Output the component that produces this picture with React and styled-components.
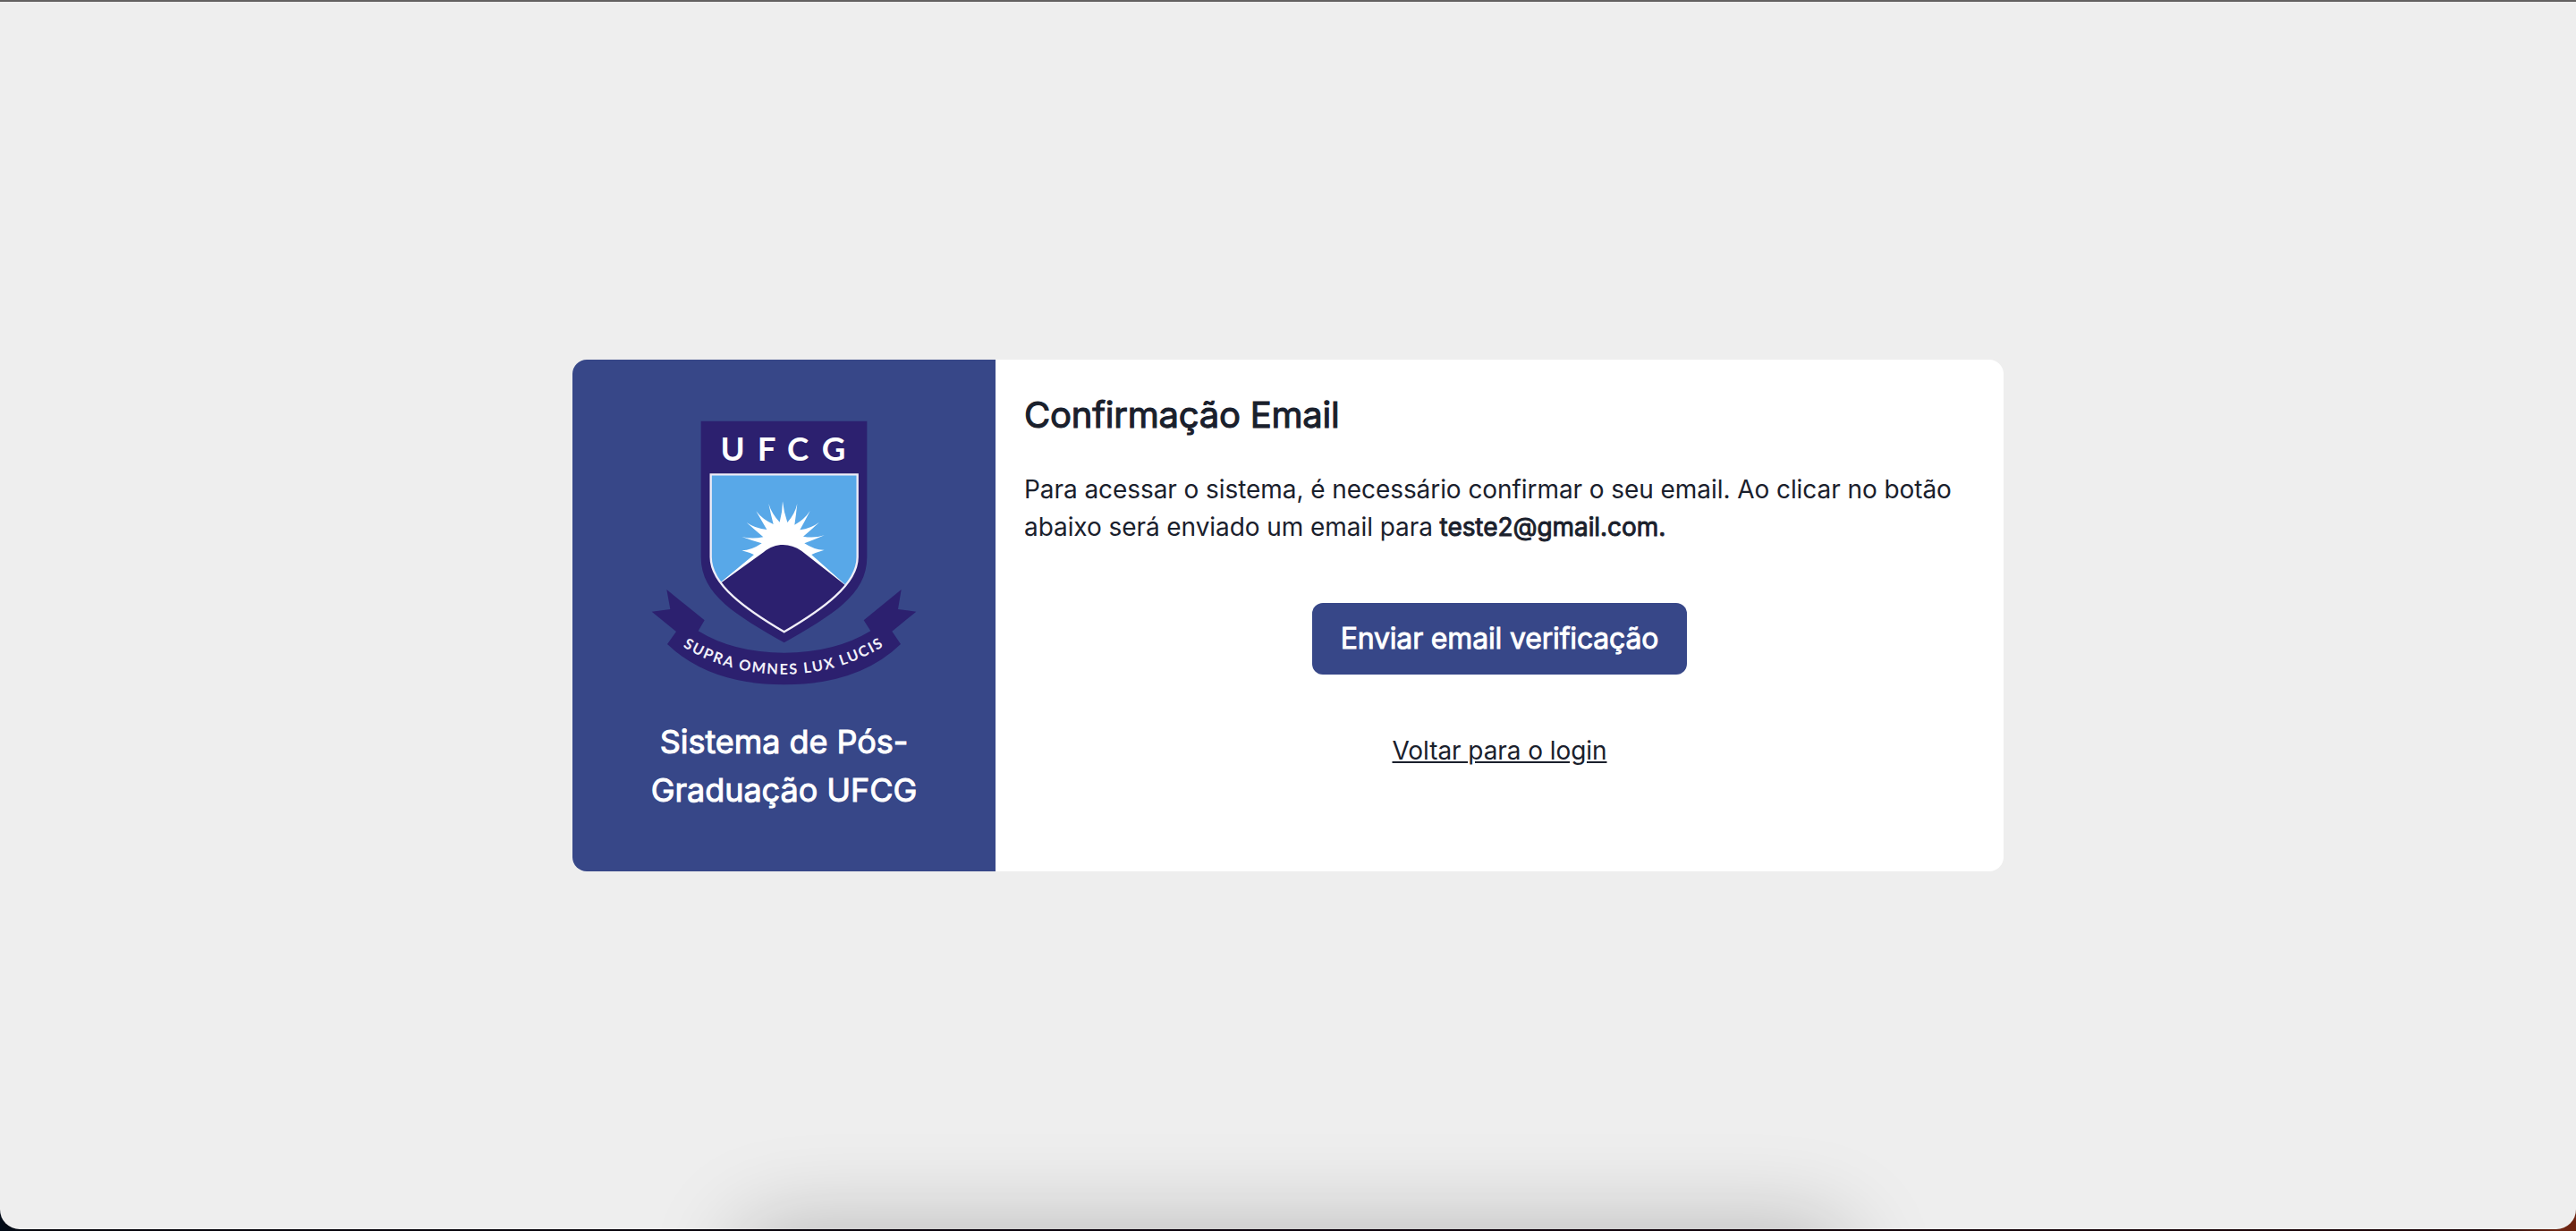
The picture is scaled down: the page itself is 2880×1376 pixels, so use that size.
import React from "react";
import styled, { createGlobalStyle } from "styled-components";

const GlobalStyle = createGlobalStyle`
  * { box-sizing: border-box; }
  body { margin: 0; }
`;

const Desktop = styled.div`
  height: 1376px;
  padding-bottom: 2px;
  overflow: hidden;
  background: linear-gradient(90deg, #020b18 0, #06060c 40px, #0b020c 50%, #1c0508 2780px, #6e2512 2860px);
  font-family: Inter, "Liberation Sans", sans-serif;
  color: #1a202c;
`;

const Page = styled.main`
  position: relative;
  display: flex;
  align-items: center;
  justify-content: center;
  height: 1374px;
  overflow: hidden;
  border-top: 2px solid #636161;
  border-radius: 0 0 22px 22px;
  background: #eeeeee;
`;

const DockShadow = styled.div`
  position: absolute;
  top: 1400px;
  left: 826px;
  width: 1240px;
  height: 160px;
  border-radius: 40px;
  box-shadow: 0 -34px 100px rgba(0, 0, 0, 0.22);
`;

const Card = styled.section`
  display: flex;
  width: 1600px;
  height: 572px;
  overflow: hidden;
  border-radius: 16px;
  background: #ffffff;
`;

const Brand = styled.aside`
  display: flex;
  flex-direction: column;
  align-items: center;
  width: 473px;
  padding: 68px 64px 0;
  background: #374788;
`;

const Crest = styled.svg`
  display: block;
  width: 297px;
  height: 296px;
`;

const Name = styled.h2`
  margin: 36px 0 0;
  font-size: 36px;
  font-weight: 400;
  line-height: 54px;
  letter-spacing: -0.05px;
  text-align: center;
  color: #ffffff;
  -webkit-text-stroke: 1px currentColor;
`;

const Content = styled.div`
  display: flex;
  flex: 1;
  flex-direction: column;
  align-items: center;
  padding: 32px;
`;

const Title = styled.h1`
  align-self: stretch;
  margin: 0;
  font-size: 40px;
  font-weight: 400;
  line-height: 60px;
  letter-spacing: -0.23px;
  -webkit-text-stroke: 1.1px currentColor;
`;

const Text = styled.p`
  align-self: stretch;
  margin: 32px 0 0;
  font-size: 28px;
  line-height: 42px;
  letter-spacing: -0.07px;
`;

const Email = styled.strong`
  font-weight: 400;
  -webkit-text-stroke: 0.9px currentColor;
`;

const Button = styled.button`
  height: 80px;
  margin-top: 64px;
  padding: 0 32px;
  border: 0;
  border-radius: 12px;
  background: #374788;
  color: #ffffff;
  font: 400 32px/48px Inter, "Liberation Sans", sans-serif;
  letter-spacing: -0.17px;
  -webkit-text-stroke: 0.9px currentColor;
`;

const BackLink = styled.a`
  margin-top: 64px;
  font-size: 28px;
  line-height: 42px;
  letter-spacing: -0.07px;
  text-decoration: underline;
`;

const Initial = styled.text`
  font: 700 110px Lato, sans-serif;
  fill: #ffffff;
  text-anchor: middle;
`;

const Motto = styled.text`
  font: 700 49px Lato, sans-serif;
  fill: #f3f1fa;
`;

const OUTER_SHIELD = "M251 92H808V548C808 676 690 742 530 835C370 742 251 676 251 548Z";
const INNER_SHIELD = "M284 271H776V548C776 640 658 724 530 799C402 724 284 640 284 548Z";

function sunRays() {
  const tips = [[388, 526], [388, 480], [404, 432], [436, 394], [478, 369], [525, 361], [574, 369], [617, 393], [648, 431], [665, 475], [665, 524]];
  const valleys = [[440, 545], [455, 502], [460, 481], [472, 456], [494, 438], [515, 431], [541, 432], [565, 440], [583, 457], [594, 479], [598, 502], [610, 545]];
  let d = `M${valleys[0]}`;
  tips.forEach(([x, y], i) => {
    const [ax, ay] = valleys[i];
    const [bx, by] = valleys[i + 1];
    const side = i < 5 ? 1 : i > 5 ? -1 : 0;
    const dx = x - (ax + bx) / 2;
    const dy = y - (ay + by) / 2;
    const len = Math.hypot(dx, dy);
    const ox = (dy / len) * side * 5;
    const oy = (-dx / len) * side * 5;
    d += ` Q${(ax + x) / 2 + ox + (bx - ax) * 0.17},${(ay + y) / 2 + oy + (by - ay) * 0.17} ${x},${y}`;
    d += ` Q${(bx + x) / 2 + ox - (bx - ax) * 0.17},${(by + y) / 2 + oy - (by - ay) * 0.17} ${bx},${by}`;
  });
  return `${d} Z`;
}

function Logo() {
  return (
    <Crest viewBox="84 90 891 888" aria-label="UFCG">
      <defs>
        <path id="motto" d="M188 847 Q340 941 530 941 Q720 941 884 834" />
        <clipPath id="shield">
          <path d={INNER_SHIELD} />
        </clipPath>
      </defs>
      <path fill="#2c206f" d={OUTER_SHIELD} />
      <path fill="#2c206f" d="M136 657L263 760L242 796Q360 869 530 869Q700 869 820 796L797 760L923 657L912 723L973 731L892 797L921 840Q780 976 530 976Q280 976 138 840L168 798L86 731L148 723Z" />
      <path fill="#58a8e8" d={INNER_SHIELD} />
      <g clipPath="url(#shield)">
        <path fill="#ffffff" d={sunRays()} />
        <path fill="#ffffff" d="M314 635L448 524Q470 470 526 450Q580 470 604 524L740 645Z" />
        <path fill="#2c206f" d="M284 659L462 531C500 500 548 500 588 527L776 674V830H284Z" />
      </g>
      <path fill="none" stroke="#f0eef8" strokeWidth="7" d={INNER_SHIELD} />
      <Initial x="357" y="225">U</Initial>
      <Initial x="471" y="225">F</Initial>
      <Initial x="576" y="225">C</Initial>
      <Initial x="696" y="225">G</Initial>
      <Motto>
        <textPath href="#motto" textLength="708" startOffset="2">SUPRA OMNES LUX LUCIS</textPath>
      </Motto>
    </Crest>
  );
}

export default function App() {
  return (
    <Desktop>
      <GlobalStyle />
      <Page>
        <Card>
          <Brand>
            <Logo />
            <Name>Sistema de Pós-Graduação UFCG</Name>
          </Brand>
          <Content>
            <Title>Confirmação Email</Title>
            <Text>
              Para acessar o sistema, é necessário confirmar o seu email. Ao clicar no botão abaixo será
              enviado um email para <Email>teste2@gmail.com.</Email>
            </Text>
            <Button type="button">Enviar email verificação</Button>
            <BackLink>Voltar para o login</BackLink>
          </Content>
        </Card>
        <DockShadow />
      </Page>
    </Desktop>
  );
}
